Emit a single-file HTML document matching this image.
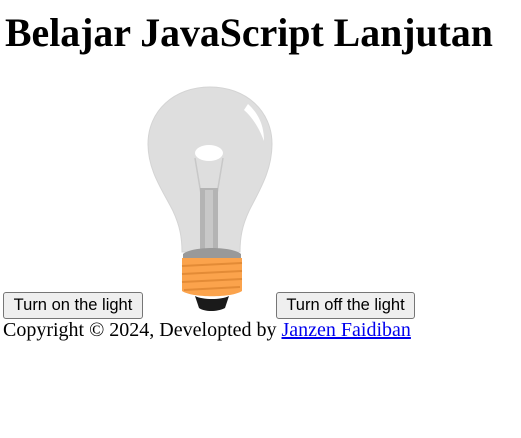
<!DOCTYPE html>
<html><head><meta charset="utf-8"><style>
body{margin:0;font-family:"Liberation Serif",serif;font-size:20px;background:#fff;color:#000;position:relative;width:521px;height:438px;overflow:hidden}
h1{position:absolute;left:5px;top:10px;margin:0;font-size:39.8px;line-height:46px;font-weight:bold;white-space:nowrap}
button{position:absolute;font-family:"Liberation Sans",sans-serif;font-size:16.5px;padding:0;border:1px solid #767676;border-radius:3px;background:#efefef;color:#000;height:27px;top:292px}
svg{position:absolute;left:147px;top:86px}
.c{position:absolute;left:3px;top:318px;line-height:24px;white-space:nowrap}
a{color:#00e}
</style></head><body>
<h1>Belajar JavaScript Lanjutan</h1>
<button style="left:3px;width:140px">Turn on the light</button>
<svg width="126" height="226" viewBox="0 0 126 226">
<path d="M63 1 C27 1 1 25 1 58 C1 85 16 105 26 125 C33 140 35 152 35 166 L93 166 C93 152 95 140 102 125 C112 105 125 85 125 58 C125 25 99 1 63 1 Z" fill="#dedede" stroke="#d4d4d4"/>
<path d="M101 18 C112 28 117 40 117 55 C112 42 106 32 97 24 Z" fill="#fff"/>
<ellipse cx="62" cy="67" rx="14" ry="8" fill="#fff"/>
<path d="M48 72 L56 120 M76 72 L68 120" stroke="#c8c8c8" stroke-width="1.5" fill="none"/>
<rect x="53" y="102" width="18" height="64" fill="#b4b4b4"/>
<rect x="58" y="104" width="8" height="60" fill="#c8c8c8"/>
<path d="M36 168 C45 160 85 160 94 168 L94 174 L36 174 Z" fill="#999"/>
<path d="M35 172 L95 172 L95 205 C85 212 45 212 35 205 Z" fill="#fba34c"/>
<path d="M35 180 L95 177 M35 188 L95 185 M35 196 L95 193 M37 204 L93 201" stroke="#e38b36" stroke-width="2"/>
<path d="M48 210 C56 214 74 214 82 210 L78 222 C70 226 58 226 52 222 Z" fill="#1a1a1a"/>
</svg>
<button style="left:276px;width:139px">Turn off the light</button>
<div class="c">Copyright © 2024, Developted by <a href="#">Janzen Faidiban</a></div>
</body></html>
